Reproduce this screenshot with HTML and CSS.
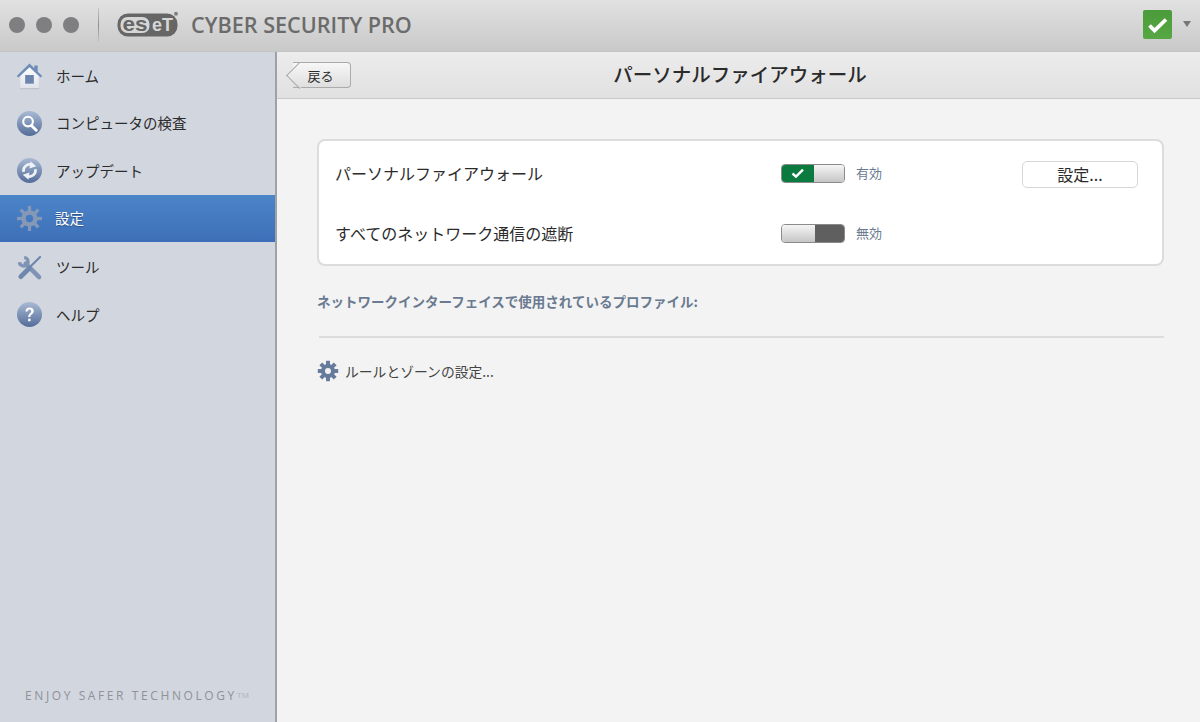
FILE: index.html
```html
<!DOCTYPE html>
<html lang="ja">
<head>
<meta charset="utf-8">
<title>ESET Cyber Security Pro</title>
<link rel="stylesheet" href="styles.css">
</head>
<body>
<div class="app">
  <header class="titlebar">
    <div class="lights"><span class="light"></span><span class="light"></span><span class="light"></span></div>
    <span class="divider"></span>
    <svg class="logo" width="64" height="26" viewBox="0 0 64 26">
      <rect x="0.500" y="1.500" width="60" height="23" rx="10.500" fill="#666"/>
      <rect x="3.500" y="5" width="29" height="16" rx="7" fill="#d6d6d6"/>
      <text x="5.500" y="18.500" class="logo-es" textLength="25" lengthAdjust="spacingAndGlyphs">es</text>
      <text x="35" y="19" class="logo-et" textLength="21" lengthAdjust="spacingAndGlyphs">eT</text>
      <circle cx="59" cy="1.800" r="2" fill="#808080"/>
    </svg>
    <span class="product">CYBER SECURITY PRO</span>
    <span class="status">
      <svg width="29" height="29" viewBox="0 0 29 29"><path d="M6.500 15.500l5 5 11.500-11" fill="none" stroke="#fff" stroke-width="3.800"/></svg>
    </span>
    <span class="caret"></span>
  </header>
  <div class="body">
    <nav class="sidebar">
      <a class="nav-item">
        <svg class="nav-icon" viewBox="0 0 28 28"><defs><linearGradient id="b" x1="0" y1="0" x2="0" y2="1"><stop offset="0" stop-color="#a9bad3"/><stop offset="1" stop-color="#536c99"/></linearGradient><linearGradient id="w" x1="0" y1="0" x2="0" y2="1"><stop offset="0" stop-color="#fff"/><stop offset="1" stop-color="#dfe3ea"/></linearGradient></defs>
          <path d="M4.500 12 14 4l9.500 8v15.500h-19z" fill="url(#w)"/><path d="M4 27.700h20" stroke="#b5bdcb" stroke-width="1"/><path d="M.8 14.500 14 1.500l5 5V3.500h3.500v6.500l4.700 4.500-1.700 1.500L14 5.500 2.500 16z" fill="#6f8cb8"/><rect x="9.500" y="13.500" width="9" height="9" fill="#6d85ad"/></svg>
        <span class="nav-text">ホーム</span></a>
      <a class="nav-item">
        <svg class="nav-icon" viewBox="0 0 28 28"><circle cx="14" cy="14" r="13" fill="url(#b)"/><circle cx="12.500" cy="12" r="5" fill="none" stroke="#fff" stroke-width="2.200"/><path d="M16 16l5 5" stroke="#fff" stroke-width="3" stroke-linecap="round"/></svg>
        <span class="nav-text">コンピュータの検査</span></a>
      <a class="nav-item">
        <svg class="nav-icon" viewBox="0 0 28 28"><circle cx="14" cy="14" r="13" fill="url(#b)"/><path d="M8 15.500A6.200 6.200 0 0 1 16.500 8.300" fill="none" stroke="#eef1f6" stroke-width="2.800"/><path d="M15 4.500l6 5-7 2.500z" fill="#eef1f6"/><path d="M20 12.500A6.200 6.200 0 0 1 11.500 19.700" fill="none" stroke="#eef1f6" stroke-width="2.800"/><path d="M13 23.500l-6-5 7-2.500z" fill="#eef1f6"/></svg>
        <span class="nav-text">アップデート</span></a>
      <a class="nav-item active">
        <svg class="nav-icon" viewBox="0 0 28 28"><path d="M14 5.500a8.500 8.500 0 1 0 0 17 8.500 8.500 0 0 0 0-17zm0 4.700a3.800 3.800 0 1 1 0 7.600 3.800 3.800 0 0 1 0-7.600z" fill="#8598b6" fill-rule="evenodd"/><g fill="#8598b6"><rect x="12.300" y="1" width="3.400" height="6"/><rect x="12.300" y="21" width="3.400" height="6"/><rect x="1" y="12.300" width="6" height="3.400"/><rect x="21" y="12.300" width="6" height="3.400"/><rect x="12.300" y="1" width="3.400" height="6" transform="rotate(45 14 14)"/><rect x="12.300" y="21" width="3.400" height="6" transform="rotate(45 14 14)"/><rect x="1" y="12.300" width="6" height="3.400" transform="rotate(45 14 14)"/><rect x="21" y="12.300" width="6" height="3.400" transform="rotate(45 14 14)"/></g></svg>
        <span class="nav-text">設定</span></a>
      <a class="nav-item">
        <svg class="nav-icon" viewBox="0 0 28 28"><path d="M10 10l14 14" stroke="#7f94b5" stroke-width="4.500" stroke-linecap="round"/><path d="M8.500 3.500A4.500 4.500 0 1 1 3.500 8.500" fill="none" stroke="#7f94b5" stroke-width="3.600"/><path d="M25 3 15 13" stroke="#6f87ad" stroke-width="2.200" stroke-linecap="round"/><path d="M13.500 15 5 23.500" stroke="#6f87ad" stroke-width="5" stroke-linecap="round"/></svg>
        <span class="nav-text">ツール</span></a>
      <a class="nav-item">
        <svg class="nav-icon" viewBox="0 0 28 28"><circle cx="14" cy="14" r="13" fill="url(#b)"/><path d="M9.800 10.800c0-2.600 1.900-4.100 4.300-4.100 2.500 0 4.300 1.400 4.300 3.600 0 3.400-3.500 3.200-3.500 6.300h-2.200c0-4 3.100-3.900 3.100-6.100 0-1-.7-1.700-1.800-1.700-1.200 0-1.800.8-1.900 2z" fill="#fff"/><rect x="12.600" y="18.300" width="2.500" height="2.700" fill="#fff"/></svg>
        <span class="nav-text">ヘルプ</span></a>
      <div class="tagline">ENJOY SAFER TECHNOLOGY<small>TM</small></div>
    </nav>
    <main class="main">
      <div class="pagehead">
        <button class="back"><span class="back-label">戻る</span></button>
        <h1>パーソナルファイアウォール</h1>
      </div>
      <div class="content">
        <section class="card">
          <div class="row">
            <span class="row-label">パーソナルファイアウォール</span>
            <span class="toggle on"><span class="side green"><svg width="14" height="11" viewBox="0 0 14 11"><path d="M1.500 5.500l3.500 3.200 7-7" fill="none" stroke="#fff" stroke-width="2.400"/></svg></span><span class="knob"></span></span>
            <span class="state">有効</span>
            <button class="btn">設定...</button>
          </div>
          <div class="row">
            <span class="row-label">すべてのネットワーク通信の遮断</span>
            <span class="toggle off"><span class="knob"></span><span class="side dark"></span></span>
            <span class="state">無効</span>
          </div>
        </section>
        <p class="profile">ネットワークインターフェイスで使用されているプロファイル:</p>
        <hr class="rule">
        <div class="link">
          <svg width="22" height="22" viewBox="0 0 28 28"><path d="M14 5a9 9 0 1 0 0 18 9 9 0 0 0 0-18zm0 5.200a3.800 3.800 0 1 1 0 7.600 3.800 3.800 0 0 1 0-7.600z" fill="#667a9c" fill-rule="evenodd"/><g fill="#667a9c"><rect x="11.500" y="1" width="5" height="6"/><rect x="11.500" y="21" width="5" height="6"/><rect x="1" y="11.500" width="6" height="5"/><rect x="21" y="11.500" width="6" height="5"/><rect x="11.500" y="1" width="5" height="6" transform="rotate(45 14 14)"/><rect x="11.500" y="21" width="5" height="6" transform="rotate(45 14 14)"/><rect x="1" y="11.500" width="6" height="5" transform="rotate(45 14 14)"/><rect x="21" y="11.500" width="6" height="5" transform="rotate(45 14 14)"/></g></svg>
          <span>ルールとゾーンの設定...</span>
        </div>
      </div>
    </main>
  </div>
</div>
</body>
</html>
```
FILE: styles.css
```css
* { box-sizing: border-box; }
html, body { margin: 0; height: 100%; overflow: hidden; }
body { font-family: "Noto Sans CJK JP", "Noto Sans", sans-serif; color: #2b2b2b; }
.app { width: 1200px; height: 722px; display: flex; flex-direction: column; background: #f3f3f3; }

.titlebar { height: 52px; flex: none; display: flex; align-items: center; padding: 0 0 1px 9px;
  background: linear-gradient(#e1e1e1, #c9c9c9); border-bottom: 1px solid #c4c4c4; }
.lights { display: flex; gap: 11px; }
.light { width: 16px; height: 16px; border-radius: 50%; background: #7f7e80; }
.divider { width: 1px; height: 34px; margin: 0 18px 0 19px; background: linear-gradient(#c8c8c8, #8f8f8f 50%, #c4c4c4); }
.logo { flex: none; overflow: visible; }
.logo-es { font: 700 21px "Liberation Sans", sans-serif; fill: #666; }
.logo-et { font: 700 19px "Liberation Sans", sans-serif; fill: #d6d6d6; }
.product { margin: 0 0 1px 10px; font: 600 21.600px "Open Sans", sans-serif; color: #6b6b6b; white-space: nowrap; }
.status { margin: 0 0 1px auto; width: 29px; height: 29px; display: flex; align-items: center; justify-content: center;
  background: linear-gradient(#4c9b3a, #57a744); border-radius: 2px; }
.caret { margin: 0 9px 3px 11px; width: 0; height: 0; border: 4.500px solid transparent; border-top: 6px solid #777; border-bottom: 0; }

.body { flex: 1; display: flex; min-height: 0; }
.sidebar { width: 277px; flex: none; display: flex; flex-direction: column;
  background: #d2d6de; border-right: 2px solid #9fa1a5; }
.nav-item { height: 47.500px; flex: none; display: flex; align-items: center; gap: 13px; padding-left: 16px;
  font-size: 14.500px; color: #2b2b2b; }
.nav-text { margin-bottom: 1px; }
.nav-icon { width: 27px; height: 27px; flex: none; overflow: visible; }
.nav-item.active { gap: 12px; margin-bottom: 1.500px; background: linear-gradient(#4d85c9, #3c6fb7); color: #fff; text-shadow: 0 1px 1px #2c4f80; }
.tagline { margin-top: auto; padding: 0 0 18px 25px; font: 12px "Open Sans", sans-serif; letter-spacing: 2.600px; color: #8f9298; white-space: nowrap; }
.tagline small { font-size: 8px; letter-spacing: 0.500px; color: #b0b3b9; vertical-align: 2px; }

.main { flex: 1; display: flex; flex-direction: column; min-width: 0; }
.pagehead { height: 47px; flex: none; display: grid; grid-template-columns: 75px 1fr 72px; align-items: center; padding-bottom: 3px;
  background: linear-gradient(#ececec, #e1e1e1); border-bottom: 1px solid #c9c9c9; }
.pagehead h1 { grid-column: 2; margin: 0; text-align: center; font-size: 19.500px; font-weight: 500; color: #2b2b2b; }
.back { position: relative; margin: 3px 0 0 16px; width: 58px; height: 26px; padding: 0 2px 0 0; font: 13px "Noto Sans CJK JP", sans-serif; color: #2b2b2b;
  background: linear-gradient(#f7f7f7, #dedede); border: 1px solid #ababab; border-left: 0; border-radius: 0 4px 4px 0; }
.back::before { content: ""; position: absolute; left: -3px; top: 3px; width: 18px; height: 18px; transform: rotate(45deg);
  background: linear-gradient(135deg, #f7f7f7, #dedede); border-left: 1px solid #ababab; border-bottom: 1px solid #ababab; }
.back-label { position: relative; }
.content { padding: 40px 36px 0 40px; }
.card { height: 127px; padding: 2.500px 24px 0 16px; background: #fff; border: 2px solid #dcdcdc; border-radius: 8px; }
.row { height: 60px; display: flex; align-items: center; }
.row-label { flex: none; width: 446px; margin-bottom: 1px; font-size: 16px; color: #2b2b2b; white-space: nowrap; }
.toggle { flex: none; width: 64px; height: 19px; display: flex; overflow: hidden; border: 1px solid #8a8a8a; border-radius: 4px; }
.side { width: 32px; display: flex; align-items: center; justify-content: center; }
.green { background: #0a7a3f; }
.dark { width: 29px; background: #5f5f5f; }
.knob { flex: 1; background: linear-gradient(#f5f5f5, #c6c6c6); }
.state { flex: none; margin: 0 0 3px 11px; width: 166px; font-size: 13px; color: #6a7a90; }
.btn { flex: none; width: 116px; height: 27px; margin-top: 2px; padding: 0 0 1px; font: 16px "Noto Sans CJK JP", sans-serif; color: #2b2b2b;
  background: #fff; border: 1px solid #d6d6d6; border-radius: 5px; }
.profile { margin: 25px 0 0; font-size: 13.500px; line-height: 20px; font-weight: 700; color: #6a7a90; white-space: nowrap; }
.rule { margin: 25px 0 0 2px; height: 2px; border: 0; background: #dcdcdc; }
.link { margin-top: 22px; display: flex; align-items: center; gap: 6px; font-size: 13.800px; color: #444; }
```
